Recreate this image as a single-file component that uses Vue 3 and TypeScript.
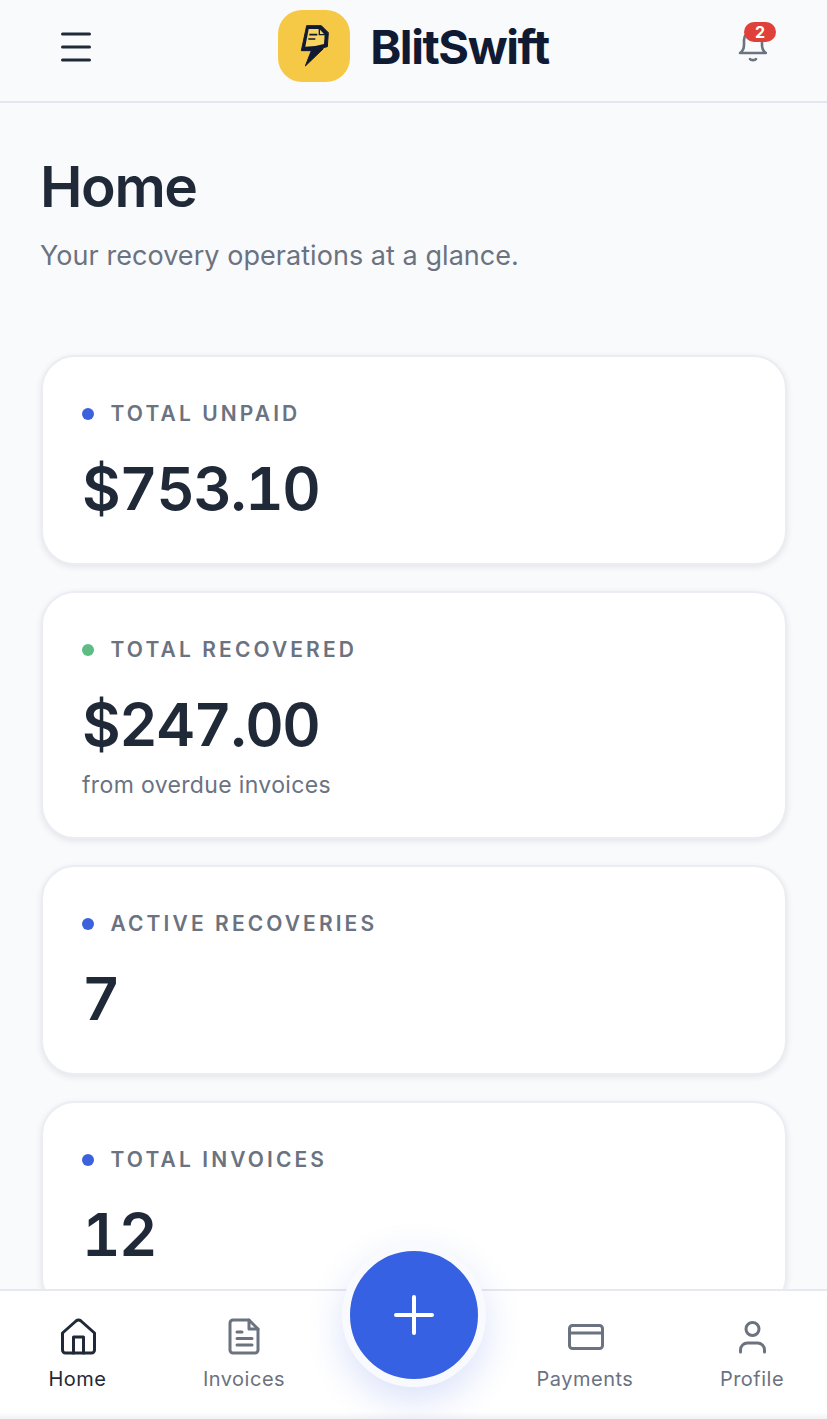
<script setup lang="ts">
interface Stat { label: string; value: string; dot: string; note?: string }
const stats: Stat[] = [
  { label: 'TOTAL UNPAID', value: '$753.10', dot: '#3b62dc' },
  { label: 'TOTAL RECOVERED', value: '$247.00', dot: '#5dbb84', note: 'from overdue invoices' },
  { label: 'ACTIVE RECOVERIES', value: '7', dot: '#3b62dc' },
  { label: 'TOTAL INVOICES', value: '12', dot: '#3b62dc' },
]
</script>

<template>
  <div class="app">
    <header class="topbar">
      <button class="menu" aria-label="Menu">
        <svg width="30" height="30" viewBox="0 0 30 30" fill="none" stroke="#1f2937" stroke-width="3" stroke-linecap="round">
          <path d="M1.500 2h27M1.500 15h27M1.500 28h27" />
        </svg>
      </button>
      <div class="brand">
        <div class="logo">
          <svg width="40" height="52" viewBox="0 0 120 156">
            <path d="M38 17H82L103 38 100 80 80 85 88 86 34 138 52 92H22z" fill="#111a33" stroke="#111a33" stroke-width="3" stroke-linejoin="round" />
            <path d="M44 27H76L92 44 90 72 64 78 34 80z" fill="#f8d560" />
            <path d="M76 26V44H94" fill="none" stroke="#111a33" stroke-width="4" />
            <path d="M46 44H70M43 57H64" stroke="#111a33" stroke-width="5" />
          </svg>
        </div>
        <span class="name">BlitSwift</span>
      </div>
      <div class="bell">
        <svg width="30" height="36" viewBox="0 0 30 36" fill="none" stroke="#6b7280" stroke-width="2.6" stroke-linecap="round" stroke-linejoin="round">
          <path d="M3 26c3-2 4-4 4-8v-5a9 9 0 0 1 18 0v5c0 4 1 6 4 8z" />
          <path d="M13 32c1 1.500 5 1.500 6 0" />
        </svg>
        <span class="badge">2</span>
      </div>
    </header>

    <main class="content">
      <h1>Home</h1>
      <p class="sub">Your recovery operations at a glance.</p>
      <section class="cards">
        <article v-for="s in stats" :key="s.label" class="card">
          <div class="label"><i class="dot" :style="{ background: s.dot }"></i>{{ s.label }}</div>
          <div class="value">{{ s.value }}</div>
          <div v-if="s.note" class="note">{{ s.note }}</div>
        </article>
      </section>
    </main>

    <nav class="tabs">
      <a class="tab active">
        <svg width="36" height="38" viewBox="0 0 36 38" fill="none" stroke="currentColor" stroke-width="3" stroke-linejoin="round" stroke-linecap="round">
          <path d="M2.500 16 16 4q2.500-2 5 0l13.500 12v17a3 3 0 0 1-3 3h-26a3 3 0 0 1-3-3z" />
          <path d="M13.500 36V20h10v16" />
        </svg>
        <span>Home</span>
      </a>
      <a class="tab">
        <svg width="32" height="38" viewBox="0 0 32 38" fill="none" stroke="currentColor" stroke-width="3" stroke-linejoin="round" stroke-linecap="round">
          <path d="M5 3h16l9 9v21a3 3 0 0 1-3 3H5a3 3 0 0 1-3-3V6a3 3 0 0 1 3-3z" />
          <path d="M21 3v9h9M9 15h5M9 21.500h15M9 28h15" />
        </svg>
        <span>Invoices</span>
      </a>
      <div class="spacer"></div>
      <a class="tab">
        <svg width="38" height="38" viewBox="0 0 38 38" fill="none" stroke="currentColor" stroke-width="3">
          <rect x="3.500" y="8.500" width="33" height="23" rx="3" />
          <path d="M3.500 16h33" />
        </svg>
        <span>Payments</span>
      </a>
      <a class="tab">
        <svg width="30" height="38" viewBox="0 0 30 38" fill="none" stroke="currentColor" stroke-width="3" stroke-linecap="round">
          <circle cx="15.500" cy="12" r="6.500" />
          <path d="M3.500 35v-2a7 7 0 0 1 7-7h10a7 7 0 0 1 7 7v2" />
        </svg>
        <span>Profile</span>
      </a>
      <button class="fab" aria-label="Add">
        <svg width="40" height="40" viewBox="0 0 40 40" stroke="#fff" stroke-width="4" stroke-linecap="round">
          <path d="M20 2v36M2 20h36" />
        </svg>
      </button>
    </nav>
  </div>
</template>

<style scoped>
.app {
  position: relative;
  width: 827px;
  height: 1419px;
  overflow: hidden;
  display: flex;
  flex-direction: column;
  background: #f9fafc;
  font-family: Inter, "Liberation Sans", sans-serif;
  color: #1f2937;
}
.topbar {
  height: 103px;
  flex: none;
  box-sizing: border-box;
  border-bottom: 2px solid #e3e7ef;
  background: #f9fafc;
  display: flex;
  align-items: center;
  justify-content: space-between;
  padding: 0 60px 9px 61px;
}
.menu {
  border: 0;
  padding: 0;
  background: none;
  display: flex;
  width: 30px;
  margin-top: 2px;
}
.brand {
  display: flex;
  align-items: center;
  gap: 20px;
  margin-left: -1px;
}
.logo {
  width: 72px;
  height: 72px;
  border-radius: 24px;
  background: #f5c945;
  display: flex;
  align-items: center;
  justify-content: center;
}
.name {
  font-size: 47px;
  font-weight: 700;
  letter-spacing: -1.400px;
  color: #111a33;
}
.bell {
  position: relative;
  width: 30px;
  height: 36px;
  margin-top: -2px;
}
.badge {
  position: absolute;
  top: -5px;
  left: 7px;
  width: 32px;
  height: 20px;
  border-radius: 10px;
  background: #e0403a;
  color: #fff;
  font-size: 16px;
  font-weight: 700;
  line-height: 20px;
  text-align: center;
}
.content {
  flex: 1;
  min-height: 0;
  overflow: hidden;
  padding: 46px 40px 0;
}
h1 {
  margin: 0;
  font-size: 57px;
  line-height: 76px;
  font-weight: 600;
  letter-spacing: -1.400px;
  color: #1f2937;
}
.sub {
  margin: 10px 0 0;
  font-size: 27px;
  line-height: 42px;
  letter-spacing: 0.050px;
  color: #6b7280;
}
.cards {
  margin: 78px 0 0 1px;
  display: flex;
  flex-direction: column;
  gap: 26px;
}
.card {
  box-sizing: border-box;
  min-height: 210px;
  padding: 42px 39px 36px;
  background: #fff;
  border: 2px solid #ebedf2;
  border-radius: 34px;
  box-shadow: 0 2px 6px rgba(31, 41, 55, 0.1);
}
.label {
  display: flex;
  align-items: center;
  gap: 16.500px;
  font-size: 21px;
  line-height: 30px;
  font-weight: 600;
  letter-spacing: 3.100px;
  color: #6b7280;
}
.dot {
  width: 12px;
  height: 12px;
  border-radius: 50%;
}
.value {
  margin-top: 23px;
  font-size: 59.500px;
  line-height: 72px;
  font-weight: 600;
  font-variant-numeric: tabular-nums;
  letter-spacing: -1.400px;
  color: #1f2937;
}
.note {
  margin-top: 9px;
  font-size: 23px;
  line-height: 32px;
  letter-spacing: 0.350px;
  color: #6b7280;
}
.tabs {
  flex: none;
  height: 130px;
  box-sizing: border-box;
  border-top: 2px solid #e6e9f0;
  background: linear-gradient(#fff 121px, #f3f4f6 127px);
  display: grid;
  grid-template-columns: 155px 178px 160px 184px 150px;
  padding-top: 26px;
}
.tab {
  display: flex;
  flex-direction: column;
  align-items: center;
  color: #6b7280;
  font-size: 20px;
  letter-spacing: 0.500px;
  line-height: 28px;
}
.tab svg {
  height: 38px;
}
.tab span {
  margin-top: 10px;
}
.tab.active {
  color: #1f2937;
}
.fab {
  position: absolute;
  left: 342px;
  top: 1243px;
  width: 144px;
  height: 144px;
  box-sizing: border-box;
  border-radius: 50%;
  border: 8px solid #f9fafd;
  background: #3661e2;
  display: flex;
  align-items: center;
  justify-content: center;
  padding: 0;
  box-shadow: 0 14px 36px rgba(54, 97, 226, 0.18);
}
</style>
